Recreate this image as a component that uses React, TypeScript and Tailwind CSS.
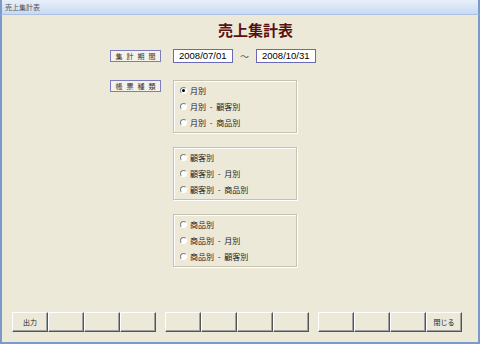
const jp = { fontFamily: '"MS UI Gothic", "Noto Sans CJK JP", sans-serif' };

const groups = [
  ['月別', '月別 - 顧客別', '月別 - 商品別'],
  ['顧客別', '顧客別 - 月別', '顧客別 - 商品別'],
  ['商品別', '商品別 - 月別', '商品別 - 顧客別'],
];

const buttons = [
  ['出力', '', '', ''],
  ['', '', '', ''],
  ['', '', '', '閉じる'],
];

function Radio({ checked }: { checked?: boolean }) {
  return (
    <span className="flex h-[7px] w-[7px] items-center justify-center rounded-full border border-t-[#808080] border-l-[#808080] border-b-white border-r-white bg-white">
      {checked && <span className="h-[3px] w-[3px] rounded-full bg-black" />}
    </span>
  );
}

function LabelBox({ text }: { text: string }) {
  return (
    <div
      className="flex h-[12px] w-[51px] items-center justify-center whitespace-nowrap border border-[#7c7cc0] bg-[#f4f2ea] pl-[4px] text-[7px] leading-none tracking-[4px] text-[#333]"
      style={jp}
    >
      {text}
    </div>
  );
}

function DateBox({ value }: { value: string }) {
  return (
    <div className="flex h-[14px] w-[60px] items-center border border-[#6a6ab4] bg-white pl-[5px] font-['Liberation_Sans',sans-serif] text-[9.5px] leading-none text-black">
      {value}
    </div>
  );
}

export default function App() {
  return (
    <div className="flex h-[344px] w-[480px] flex-col overflow-hidden">
      {/* title bar */}
      <div className="flex h-[15px] items-center border-x-2 border-[#7b9ac9] border-b border-b-[#a9c2e4] bg-gradient-to-b from-[#e8effa] to-[#c8daf2] pl-[3px]">
        <span className="text-[7px] leading-none text-[#555]" style={jp}>
          売上集計表
        </span>
      </div>

      <div className="flex flex-1 flex-col border-x-2 border-b-2 border-[#7b9ac9] bg-[#ece9d8]">
        <div
          className="mt-[6px] pl-[216px] text-[15px] font-bold leading-[17px] text-[#5c0f0f]"
          style={jp}
        >
          売上集計表
        </div>

        {/* period row */}
        <div className="mt-[11px] flex items-center pl-[108px]">
          <LabelBox text="集計期間" />
          <div className="ml-[12px]">
            <DateBox value="2008/07/01" />
          </div>
          <span className="mx-[6px] w-[11px] text-center text-[9px] leading-none text-[#555]" style={jp}>
            ～
          </span>
          <DateBox value="2008/10/31" />
        </div>

        {/* type row */}
        <div className="mt-[17px] flex items-start pl-[108px]">
          <LabelBox text="帳票種類" />
          <div className="ml-[12px] flex flex-col gap-[14px]">
            {groups.map((g, gi) => (
              <div
                key={gi}
                className="flex h-[53px] w-[124px] flex-col justify-center gap-[6px] border border-[#c5c2b2] pl-[6px] shadow-[inset_1px_1px_0_#fff,1px_1px_0_#fff]"
              >
                {g.map((label, i) => (
                  <div key={label} className="flex h-[10px] items-center gap-[3px]">
                    <Radio checked={gi === 0 && i === 0} />
                    <span className="whitespace-pre text-[8px] leading-none text-[#222] [word-spacing:2px]" style={jp}>
                      {label}
                    </span>
                  </div>
                ))}
              </div>
            ))}
          </div>
        </div>

        {/* function buttons */}
        <div className="mt-auto mb-[10px] flex gap-[9px] pl-[10px]">
          {buttons.map((row, ri) => (
            <div key={ri} className="flex">
              {row.map((label, i) => (
                <div
                  key={i}
                  className="flex h-[20px] w-[36px] items-center justify-center border border-t-white border-l-white border-b-[#555] border-r-[#555] bg-[#ece9d8] text-[7px] leading-none text-[#222] shadow-[inset_-1px_-1px_0_#a0a0a0]"
                  style={jp}
                >
                  {label}
                </div>
              ))}
            </div>
          ))}
        </div>
      </div>
    </div>
  );
}
